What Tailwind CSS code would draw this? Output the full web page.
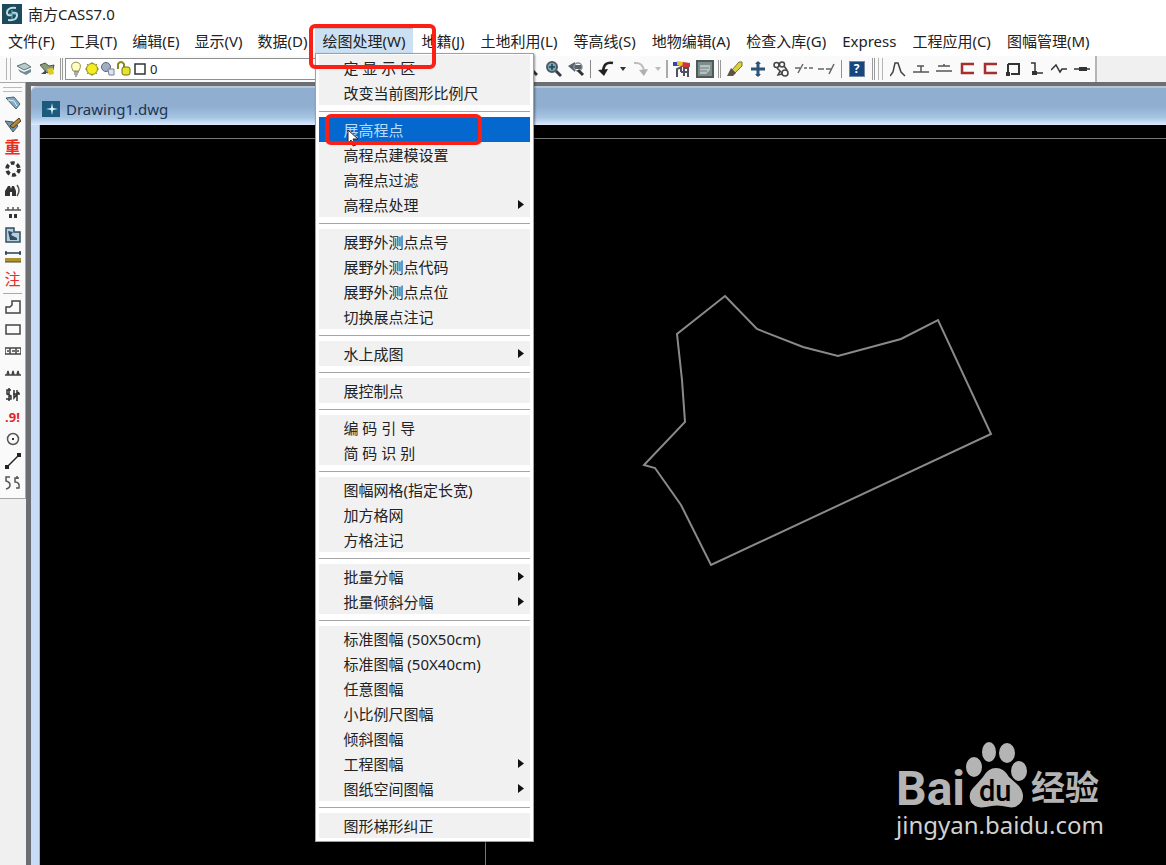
<!DOCTYPE html>
<html lang="zh-CN">

<head>
    <meta charset="UTF-8" />
    <title>南方CASS7.0</title>
    <script src="https://cdn.jsdelivr.net/npm/@tailwindcss/browser@4"></script>
</head>

<body class="h-screen flex flex-col overflow-hidden bg-[#f0f0f0] font-['Noto_Sans','Noto_Sans_CJK_SC',sans-serif] text-[15px] leading-5 text-[#222]">

    <!-- Title bar -->
    <header class="h-7 flex-none flex items-center gap-1.5 px-0.5 bg-white">
        <svg class="size-5" viewBox="0 0 20 20">
            <rect width="20" height="20" fill="#1d4a5c" />
            <path d="M14 4Q5 3 5 9q0 3 5 2M6 16q9 1 9-5 0-3-5-2" fill="none" stroke="#b9dfe4" stroke-width="2" />
            <path d="M10 6v9M7 10h7" stroke="#6fb3c0" />
        </svg>
        <h1>南方CASS7.0</h1>
    </header>

    <!-- Menu bar -->
    <nav class="h-7 flex-none bg-white relative z-20">
        <ul class="flex items-center h-[26px] pl-px whitespace-nowrap">
            <li><button class="pl-[7px] pr-2">文件(F)</button></li>
            <li><button class="pl-[7px] pr-2">工具(T)</button></li>
            <li><button class="pl-[7px] pr-2">编辑(E)</button></li>
            <li><button class="pl-[7px] pr-2">显示(V)</button></li>
            <li><button class="pl-[7px] pr-2">数据(D)</button></li>
            <li class="relative">
                <button class="h-[26px] pl-[7px] pr-2 bg-[#cbe1f3] border-y border-t-[#b0bfcc] border-b-[#cbe1f3]">绘图处理(W)</button>

                <ul class="absolute left-0 top-[25px] w-[219px] px-[3px] pt-px pb-[3px] bg-white border border-[#a0a0a0] shadow-[1px_1px_2px_#0006]">
                    <li><button class="w-full h-[25px] pl-6 text-left bg-[#f1f1f1]">定 显 示 区</button></li>
                    <li><button class="w-full h-[25px] pl-6 text-left bg-[#f1f1f1]">改变当前图形比例尺</button></li>
                    <li class="h-3 flex items-center"><hr class="w-full border-[#a6a6a6]" /></li>
                    <li class="relative">
                        <button class="w-full h-[25px] pl-6 text-left bg-[#0568cf] text-[#b9dcff]">展高程点</button>
                        <svg class="absolute left-7 top-3 w-3 h-[18px]" viewBox="0 0 12 18">
                            <path d="M1 1v13l3-3 2 6 3-1-3-6h5z" fill="#fff" stroke="#222" />
                        </svg>
                        <div class="absolute left-[6px] -top-[3px] w-[157px] h-[31px] border-4 border-[#fb2015] rounded-md pointer-events-none"></div>
                    </li>
                    <li><button class="w-full h-[25px] pl-6 text-left bg-[#f1f1f1]">高程点建模设置</button></li>
                    <li><button class="w-full h-[25px] pl-6 text-left bg-[#f1f1f1]">高程点过滤</button></li>
                    <li>
                        <button class="w-full h-[25px] pl-6 pr-1.5 flex items-center justify-between bg-[#f1f1f1]">高程点处理
                            <svg class="w-1.5 h-3" viewBox="0 0 6 12"><path d="M0 1v9l6-4.500z" fill="#111" /></svg>
                        </button>
                    </li>
                    <li class="h-3 flex items-center"><hr class="w-full border-[#a6a6a6]" /></li>
                    <li><button class="w-full h-[25px] pl-6 text-left bg-[#f1f1f1]">展野外测点点号</button></li>
                    <li><button class="w-full h-[25px] pl-6 text-left bg-[#f1f1f1]">展野外测点代码</button></li>
                    <li><button class="w-full h-[25px] pl-6 text-left bg-[#f1f1f1]">展野外测点点位</button></li>
                    <li><button class="w-full h-[25px] pl-6 text-left bg-[#f1f1f1]">切换展点注记</button></li>
                    <li class="h-3 flex items-center"><hr class="w-full border-[#a6a6a6]" /></li>
                    <li>
                        <button class="w-full h-[25px] pl-6 pr-1.5 flex items-center justify-between bg-[#f1f1f1]">水上成图
                            <svg class="w-1.5 h-3" viewBox="0 0 6 12"><path d="M0 1v9l6-4.500z" fill="#111" /></svg>
                        </button>
                    </li>
                    <li class="h-3 flex items-center"><hr class="w-full border-[#a6a6a6]" /></li>
                    <li><button class="w-full h-[25px] pl-6 text-left bg-[#f1f1f1]">展控制点</button></li>
                    <li class="h-3 flex items-center"><hr class="w-full border-[#a6a6a6]" /></li>
                    <li><button class="w-full h-[25px] pl-6 text-left bg-[#f1f1f1]">编 码 引 导</button></li>
                    <li><button class="w-full h-[25px] pl-6 text-left bg-[#f1f1f1]">简 码 识 别</button></li>
                    <li class="h-3 flex items-center"><hr class="w-full border-[#a6a6a6]" /></li>
                    <li><button class="w-full h-[25px] pl-6 text-left bg-[#f1f1f1]">图幅网格(指定长宽)</button></li>
                    <li><button class="w-full h-[25px] pl-6 text-left bg-[#f1f1f1]">加方格网</button></li>
                    <li><button class="w-full h-[25px] pl-6 text-left bg-[#f1f1f1]">方格注记</button></li>
                    <li class="h-3 flex items-center"><hr class="w-full border-[#a6a6a6]" /></li>
                    <li>
                        <button class="w-full h-[25px] pl-6 pr-1.5 flex items-center justify-between bg-[#f1f1f1]">批量分幅
                            <svg class="w-1.5 h-3" viewBox="0 0 6 12"><path d="M0 1v9l6-4.500z" fill="#111" /></svg>
                        </button>
                    </li>
                    <li>
                        <button class="w-full h-[25px] pl-6 pr-1.5 flex items-center justify-between bg-[#f1f1f1]">批量倾斜分幅
                            <svg class="w-1.5 h-3" viewBox="0 0 6 12"><path d="M0 1v9l6-4.500z" fill="#111" /></svg>
                        </button>
                    </li>
                    <li class="h-3 flex items-center"><hr class="w-full border-[#a6a6a6]" /></li>
                    <li><button class="w-full h-[25px] pl-6 text-left bg-[#f1f1f1]">标准图幅 (50X50cm)</button></li>
                    <li><button class="w-full h-[25px] pl-6 text-left bg-[#f1f1f1]">标准图幅 (50X40cm)</button></li>
                    <li><button class="w-full h-[25px] pl-6 text-left bg-[#f1f1f1]">任意图幅</button></li>
                    <li><button class="w-full h-[25px] pl-6 text-left bg-[#f1f1f1]">小比例尺图幅</button></li>
                    <li><button class="w-full h-[25px] pl-6 text-left bg-[#f1f1f1]">倾斜图幅</button></li>
                    <li>
                        <button class="w-full h-[25px] pl-6 pr-1.5 flex items-center justify-between bg-[#f1f1f1]">工程图幅
                            <svg class="w-1.5 h-3" viewBox="0 0 6 12"><path d="M0 1v9l6-4.500z" fill="#111" /></svg>
                        </button>
                    </li>
                    <li>
                        <button class="w-full h-[25px] pl-6 pr-1.5 flex items-center justify-between bg-[#f1f1f1]">图纸空间图幅
                            <svg class="w-1.5 h-3" viewBox="0 0 6 12"><path d="M0 1v9l6-4.500z" fill="#111" /></svg>
                        </button>
                    </li>
                    <li class="h-3 flex items-center"><hr class="w-full border-[#a6a6a6]" /></li>
                    <li><button class="w-full h-[25px] pl-6 text-left bg-[#f1f1f1]">图形梯形纠正</button></li>
                </ul>

                <div class="absolute -left-[6px] -top-1 w-[127px] h-[45px] border-4 border-[#fb2015] rounded-md pointer-events-none"></div>
            </li>
            <li><button class="px-2">地籍(J)</button></li>
            <li><button class="px-2">土地利用(L)</button></li>
            <li><button class="px-2">等高线(S)</button></li>
            <li><button class="px-2">地物编辑(A)</button></li>
            <li><button class="px-2">检查入库(G)</button></li>
            <li><button class="px-2">Express</button></li>
            <li><button class="px-2">工程应用(C)</button></li>
            <li><button class="px-2">图幅管理(M)</button></li>
        </ul>
    </nav>

    <!-- Toolbar -->
    <div class="h-[26px] flex-none flex bg-[#f0f0f0]">
        <div class="flex items-center bg-[#fafafa] border-r-2 border-[#b5b5b5] pr-0.5">
            <span class="w-[5px] h-[22px] ml-1.5 mr-[3px] border-x border-[#b5b5b5]"></span>
            <button class="w-[22px] grid place-items-center" aria-label="图层">
                <svg class="size-4" viewBox="0 0 16 16">
                    <path d="M0 5l8-3 6 4-7 3z" fill="#b7c9c8" stroke="#5d7678" />
                    <path d="M1 8l6 3 7-3v3l-5 3-6-3z" fill="#6c8d93" />
                </svg>
            </button>
            <button class="w-[22px] grid place-items-center" aria-label="图层置为当前">
                <svg class="size-4" viewBox="0 0 16 16">
                    <path d="M1 4l5-2 4 3 5-1-1 5-6 3z" fill="#8a9a78" stroke="#4b5548" />
                    <path d="M8 8l6-1 1 6-5 1z" fill="#e0c928" />
                    <path d="M2 13l5-4v4z" fill="#394f63" />
                </svg>
            </button>
            <span class="w-[3px] h-[22px] mx-[2px] border-x border-[#9b9b9b]"></span>
            <div class="w-[454px] h-[22px] flex items-center bg-white border border-[#909090] pl-0.5">
                <svg class="w-4 h-4" viewBox="0 0 16 16">
                    <path d="M5 10Q1 2 8 1q7 1 3 9z" fill="#fffbc4" stroke="#9a9352" />
                    <path d="M6 11h5M6 13h4M7 15h2" stroke="#555" />
                </svg>
                <svg class="w-4 h-4" viewBox="0 0 16 16">
                    <path d="M8 1v14M1 8h14M3 3l10 10M13 3L3 13" stroke="#8f8f30" />
                    <circle cx="8" cy="8" r="5.500" fill="#f3ec1f" stroke="#85852a" />
                </svg>
                <svg class="w-4 h-4" viewBox="0 0 16 16">
                    <circle cx="6" cy="6" r="4.500" fill="#a3adc2" stroke="#59637f" />
                    <path d="M8 8h6v6H9z" fill="#dfe3ea" stroke="#77809a" />
                </svg>
                <svg class="w-4 h-4" viewBox="0 0 16 16">
                    <path d="M2 8V3q3-4 6 0v4" fill="none" stroke="#8a8a20" stroke-width="2" />
                    <rect x="6" y="6" width="8" height="8" rx="2" fill="#e5e22b" stroke="#6f6e21" />
                </svg>
                <svg class="w-4 h-4" viewBox="0 0 16 16">
                    <rect x="3" y="3" width="10" height="10" fill="#fff" stroke="#333" stroke-width="1.500" />
                </svg>
                <select class="flex-1 appearance-none text-[13px] pl-0.5" aria-label="当前图层">
                    <option>0</option>
                </select>
            </div>
            <button class="w-[22px] grid place-items-center" aria-label="实时缩放">
                <svg class="size-4" viewBox="0 0 16 16"><circle cx="7" cy="6" r="4" fill="#bcd" stroke="#444" stroke-width="2" /><path d="M10 9l5 5" stroke="#333" stroke-width="3" /></svg>
            </button>
            <button class="w-[23px] grid place-items-center" aria-label="窗口缩放">
                <svg class="size-[18px]" viewBox="0 0 18 18">
                    <circle cx="8" cy="7" r="5" fill="#7fa9b5" stroke="#4a5a63" stroke-width="2" />
                    <path d="M5 7h6M8 4v6" stroke="#1e4058" stroke-width="1.500" />
                    <path d="M12 11l5 5" stroke="#333d45" stroke-width="3" />
                </svg>
            </button>
            <button class="w-[23px] grid place-items-center" aria-label="缩放上一个">
                <svg class="size-[18px]" viewBox="0 0 18 18">
                    <path d="M1 6l7-4v3h7v4H8v3z" fill="#56616c" />
                    <circle cx="11" cy="7" r="4" fill="none" stroke="#8a8f9b" stroke-width="1.500" />
                    <path d="M11 10l5 5" stroke="#333" stroke-width="3" />
                </svg>
            </button>
            <span class="w-px h-[18px] mx-[3px] bg-[#888]"></span>
            <button class="w-[23px] grid place-items-center" aria-label="放弃">
                <svg class="size-4" viewBox="0 0 16 16"><path d="M15 2Q6 0 5 10" fill="none" stroke="#222" stroke-width="2.500" /><path d="M0 9l10-1-4 7z" fill="#222" /></svg>
            </button>
            <button class="w-3 grid place-items-center" aria-label="放弃列表">
                <svg class="w-1.5 h-1" viewBox="0 0 6 4"><path d="M0 0h6L3 4z" fill="#333" /></svg>
            </button>
            <button class="w-[23px] grid place-items-center" aria-label="重做">
                <svg class="size-4" viewBox="0 0 16 16"><path d="M1 2q9-1 10 8" fill="none" stroke="#bbb" stroke-width="2" /><path d="M6 9l9-1-4 7z" fill="#b0b0b0" /></svg>
            </button>
            <button class="w-3 grid place-items-center" aria-label="重做列表">
                <svg class="w-1.5 h-1" viewBox="0 0 6 4"><path d="M0 0h6L3 4z" fill="#bbb" /></svg>
            </button>
            <span class="w-0.5 h-[18px] mx-[2px] bg-[#aaa]"></span>
            <button class="w-[23px] grid place-items-center" aria-label="特性匹配">
                <svg class="size-[18px]" viewBox="0 0 18 18">
                    <path d="M0 2h7v4H0z" fill="#3545ad" />
                    <path d="M4 1l7 1-2 5-5-2z" fill="#e6c428" />
                    <path d="M10 2l7 1v4H9z" fill="#d03535" />
                    <path d="M4 17V9l4-2v5M11 16V8h4v9M8 12h7" fill="none" stroke="#505060" stroke-width="2" />
                </svg>
            </button>
            <button class="w-[23px] grid place-items-center" aria-label="特性">
                <svg class="size-[18px]" viewBox="0 0 18 18">
                    <rect x="1" y="1" width="16" height="16" fill="#7e8c8c" stroke="#4e5959" stroke-width="2" />
                    <path d="M4 5h10v5l-4 4H4z" fill="#b5c2bf" />
                    <path d="M4 8h9M4 11h7" stroke="#72807e" />
                </svg>
            </button>
            <span class="w-[3px] h-[18px] mx-[2px] border-x border-[#999]"></span>
            <button class="w-[23px] grid place-items-center" aria-label="删除">
                <svg class="size-4" viewBox="0 0 16 16"><path d="M5 9l7-8h3v4l-7 7z" fill="#ded03b" stroke="#77733a" /><path d="M0 15l4-8 5 5-3 3z" fill="#5b544b" /></svg>
            </button>
            <button class="w-[23px] grid place-items-center" aria-label="移动">
                <svg class="size-4" viewBox="0 0 16 16"><path d="M8 1v14M1 8h14" stroke="#2c547b" stroke-width="3" /><path d="M5 3l3-3 3 3zM5 13l3 3 3-3z" fill="#2c547b" /></svg>
            </button>
            <button class="w-[23px] grid place-items-center" aria-label="复制">
                <svg class="size-4" viewBox="0 0 16 16"><g fill="none" stroke="#444" stroke-width="1.500"><circle cx="3.500" cy="4" r="2.500" /><circle cx="9" cy="3.500" r="2.500" /><circle cx="12" cy="12" r="3" /><path d="M4 7l5 5M11 5l3 4M7 10l-2 4 4-1" /></g></svg>
            </button>
            <button class="w-[23px] grid place-items-center" aria-label="修剪">
                <svg class="w-[18px] h-4" viewBox="0 0 18 16"><path d="M0 7h5M9 7h3M14 7h4M3 12l5-9" fill="none" stroke="#666" stroke-width="1.500" /></svg>
            </button>
            <button class="w-[23px] grid place-items-center" aria-label="延伸">
                <svg class="w-[18px] h-4" viewBox="0 0 18 16"><path d="M0 8h6M8 8h6M11 13l5-10" fill="none" stroke="#666" stroke-width="1.500" /></svg>
            </button>
            <span class="w-px h-[18px] mx-[3px] bg-[#a08f80]"></span>
            <button class="w-[23px] grid place-items-center" aria-label="帮助">
                <span class="size-4 bg-[#17477f] border border-[#6f8ba8] text-white text-xs leading-[14px] font-bold">?</span>
            </button>
            <span class="w-[3px] h-[22px] ml-1 border-x border-[#999]"></span>
            <span class="w-[5px] h-[22px] mx-[3px] border-x border-[#b5b5b5]"></span>
            <button class="w-[23px] grid place-items-center" aria-label="多段线">
                <svg class="size-4" viewBox="0 0 16 16"><path d="M0 15l3-4 2-9h3l3 9 4 4" fill="none" stroke="#444" stroke-width="1.500" /></svg>
            </button>
            <button class="w-[23px] grid place-items-center" aria-label="坎线">
                <svg class="size-4" viewBox="0 0 16 16"><path d="M0 11h16M4 5h7M8 5v6" fill="none" stroke="#555" stroke-width="1.500" /></svg>
            </button>
            <button class="w-[23px] grid place-items-center" aria-label="平行线">
                <svg class="size-4" viewBox="0 0 16 16"><path d="M2 5h12M0 10h16M8 3v2" fill="none" stroke="#555" stroke-width="1.500" /></svg>
            </button>
            <button class="w-[23px] grid place-items-center" aria-label="三点房屋">
                <svg class="size-4" viewBox="0 0 16 16"><path d="M15 3H3v9h12" fill="none" stroke="#a52e2e" stroke-width="2.500" /></svg>
            </button>
            <button class="w-[23px] grid place-items-center" aria-label="四点房屋">
                <svg class="size-4" viewBox="0 0 16 16"><path d="M15 3H3v9h12" fill="none" stroke="#a52e2e" stroke-width="2.500" /></svg>
            </button>
            <button class="w-[23px] grid place-items-center" aria-label="多点房屋">
                <svg class="size-4" viewBox="0 0 16 16"><path d="M3 3h11v10H6M3 3v8" fill="none" stroke="#333" stroke-width="2" /><path d="M1 11h4v4H1z" fill="#333" /></svg>
            </button>
            <button class="w-[23px] grid place-items-center" aria-label="折线">
                <svg class="size-4" viewBox="0 0 16 16"><path d="M3 2h4v10h8" fill="none" stroke="#333" stroke-width="1.500" /><path d="M4 10h5v4H4z" fill="#333" /></svg>
            </button>
            <button class="w-[23px] grid place-items-center" aria-label="曲线">
                <svg class="size-4" viewBox="0 0 16 16"><path d="M0 9l5-5 4 7 2-3h5" fill="none" stroke="#333" stroke-width="1.500" /></svg>
            </button>
            <button class="w-[23px] grid place-items-center" aria-label="加点">
                <svg class="size-4" viewBox="0 0 16 16"><path d="M0 8h16" stroke="#333" stroke-width="1.500" /><path d="M5 6h8v4H5z" fill="#333" /></svg>
            </button>
        </div>
    </div>

    <!-- Workspace -->
    <div class="flex-1 flex min-h-0">
        <aside class="w-[26px] flex-none">
            <div class="flex flex-col bg-[#fafafa] border-t border-r border-b border-[#a8a8a8] pb-1">
                <span class="h-[5px] mx-[3px] mt-1 border-y border-[#bbb]"></span>
                <button class="h-[22px] grid place-items-center" aria-label="查看实体编码">
                    <svg class="size-4" viewBox="0 0 16 16"><path d="M1 3l8-1 6 7-4 5z" fill="#86abc2" stroke="#426378" /><path d="M3 5l6 1 3 5" stroke="#dcecf4" fill="none" /></svg>
                </button>
                <button class="h-[22px] grid place-items-center" aria-label="加入实体编码">
                    <svg class="size-4" viewBox="0 0 16 16"><path d="M0 4l8 1 5 4-5 6z" fill="#7596aa" stroke="#3e5663" /><path d="M5 9l9-8 2 3-8 7z" fill="#bb862c" stroke="#4b3a20" /></svg>
                </button>
                <button class="h-[22px] text-base leading-[22px] font-bold text-[#ee2c1d]">重</button>
                <button class="h-[22px] grid place-items-center" aria-label="批量选目标">
                    <svg class="size-4" viewBox="0 0 16 16"><circle cx="8" cy="8" r="6" fill="none" stroke="#333" stroke-width="3.500" stroke-dasharray="4 2.300" /></svg>
                </button>
                <button class="h-[22px] grid place-items-center" aria-label="查找">
                    <svg class="size-4" viewBox="0 0 16 16"><path d="M0 13V8l3-5h2l1 3 1-3h2l2 5v5H7V9H5v4z" fill="#333" /><path d="M12 2q4 5 0 11" fill="none" stroke="#555" stroke-width="1.500" /></svg>
                </button>
                <button class="h-[22px] grid place-items-center" aria-label="坎高查询">
                    <svg class="size-4" viewBox="0 0 16 16"><path d="M0 5h16M3 2v3M8 2v3M13 2v3" stroke="#555" stroke-width="1.500" /><path d="M4 9h3v4H4zM9 9h3v4H9z" fill="#333" /></svg>
                </button>
                <button class="h-[22px] grid place-items-center" aria-label="属性复制">
                    <svg class="size-4" viewBox="0 0 16 16"><path d="M1 1h8v4h6v10H1z" fill="#b9cedb" stroke="#2e4d63" stroke-width="1.500" /><path d="M3 4l5 1-2 3 6 3v2H5z" fill="#2e4d63" /></svg>
                </button>
                <button class="h-[22px] grid place-items-center" aria-label="量距">
                    <svg class="size-4" viewBox="0 0 16 16"><path d="M0 4h16M1 2v4M15 2v4" stroke="#223f5c" stroke-width="1.500" /><path d="M0 9h16v4H0z" fill="#ae9130" /><path d="M0 13h16" stroke="#554a20" /></svg>
                </button>
                <button class="h-[22px] text-base leading-[22px] text-[#e2302b]">注</button>
                <span class="h-1.5 mx-[3px] flex items-center"><hr class="w-full border-[#aaa]" /></span>
                <button class="h-[22px] grid place-items-center" aria-label="多点一般房屋">
                    <svg class="size-4" viewBox="0 0 16 16"><path d="M1 8h4l2-2V2h8v12H1z" fill="none" stroke="#444" stroke-width="1.500" /></svg>
                </button>
                <button class="h-[22px] grid place-items-center" aria-label="四点一般房屋">
                    <svg class="size-4" viewBox="0 0 16 16"><rect x="1" y="4" width="14" height="9" fill="none" stroke="#444" stroke-width="1.500" /></svg>
                </button>
                <button class="h-[22px] grid place-items-center" aria-label="依比例围墙">
                    <svg class="size-4" viewBox="0 0 16 16"><path d="M0 5h16v6H0zM5 5v6M11 5v6M2 8h2M7 8h3M12 8h2" fill="none" stroke="#444" stroke-width="1.500" /></svg>
                </button>
                <button class="h-[22px] grid place-items-center" aria-label="陡坎">
                    <svg class="size-4" viewBox="0 0 16 16"><path d="M0 10h16M2 10l1-4 1 4M7 10l1-4 1 4M12 10l1-4 1 4" fill="none" stroke="#444" stroke-width="1.500" /></svg>
                </button>
                <button class="h-[22px] grid place-items-center" aria-label="斜坡">
                    <svg class="size-4" viewBox="0 0 16 16"><path d="M6 3H2v4l4 2v3H1M4 1v13M9 3v8l5-6M8 7h7M12 3v11" fill="none" stroke="#333" stroke-width="1.500" /></svg>
                </button>
                <button class="h-[22px] text-[13px] leading-[22px] font-bold text-[#df2a2a]">.9!</button>
                <button class="h-[22px] grid place-items-center" aria-label="圆">
                    <svg class="size-4" viewBox="0 0 16 16"><circle cx="8" cy="8" r="5.500" fill="none" stroke="#555" stroke-width="1.500" /><path d="M7 8h2" stroke="#333" stroke-width="2" /></svg>
                </button>
                <button class="h-[22px] grid place-items-center" aria-label="直线">
                    <svg class="size-4" viewBox="0 0 16 16"><path d="M1 15L15 1" stroke="#222" stroke-width="1.500" /><path d="M0 12h4v4H0zM12 0h4v4h-4z" fill="#222" /></svg>
                </button>
                <button class="h-[22px] grid place-items-center" aria-label="曲线拟合">
                    <svg class="size-4" viewBox="0 0 16 16"><path d="M5 2H1v4q4 1 4 4t-4 4M14 3h-4v4q5 0 4 6h-3M12 1v3" fill="none" stroke="#555" stroke-width="1.500" /></svg>
                </button>
            </div>
        </aside>

        <section class="flex-1 min-w-0 flex flex-col border-t-4 border-l-[5px] border-[#6b6f73]">
            <div class="h-[39px] flex-none flex items-center gap-1.5 pl-[11px] pt-1.5 pb-0.5 rounded-tl-md border-t-2 border-[#b9c4d4] bg-linear-to-b from-[#90aed0] from-50% via-[#a6c5e3] via-80% to-[#dceafd]">
                <svg class="w-[18px] h-4" viewBox="0 0 18 16">
                    <rect width="18" height="16" fill="#1b5a7c" />
                    <path d="M10 2l1 5 5 1-5 1-1 5-1-5-5-1 5-1z" fill="#d8f3fb" />
                </svg>
                <h2 class="text-[#1f3450]">Drawing1.dwg</h2>
            </div>
            <div class="flex-1 min-h-0 flex">
                <div class="w-[9px] flex-none bg-[#c9dcf5] border-r border-[#86b3d6]"></div>
                <main class="relative flex-1 min-w-0 overflow-hidden bg-black">
                    <svg class="absolute left-0 top-0 w-[1126px] h-[740px]" viewBox="40 125 1126 740" fill="none">
                        <path d="M40 138.500H1166M485.500 830V865" stroke="#777" />
                        <polygon points="725,296 757,329 803,347 838,356 901,339 938,320 991,434 711,565 681,505 655,468 644,465 685,422 682,380 677,334" stroke="#8a8a8a" stroke-width="2" />
                    </svg>

                    <!-- Watermark -->
                    <div class="absolute right-[60px] bottom-[26px] w-[210px] text-[#b4b4b4]">
                        <div class="flex items-end">
                            <span class="font-['Roboto',sans-serif] font-bold text-5xl leading-[44px]">Bai</span>
                            <svg class="w-[62px] h-[70px] flex-none" viewBox="0 0 62 70">
                                <g fill="#b4b4b4">
                                    <ellipse cx="9" cy="26" rx="8" ry="10" />
                                    <ellipse cx="24" cy="11" rx="7" ry="10" />
                                    <ellipse cx="42" cy="12" rx="8" ry="10" />
                                    <ellipse cx="54" cy="30" rx="8" ry="10" />
                                    <path d="M31 27q8 0 13 9l10 9q6 8 3 15-5 8-14 6-11-3-22 0-11 2-15-5-4-9 4-16l8-9q5-9 13-9z" />
                                </g>
                                <text x="14" y="60" font-family="Roboto, sans-serif" font-size="29" font-weight="500" fill="#000">du</text>
                            </svg>
                            <span class="pl-1 text-[34px] leading-[44px] pb-0.5 font-bold">经验</span>
                        </div>
                        <div class="text-2xl leading-7 text-[#d2d2d2]">jingyan.baidu.com</div>
                    </div>
                </main>
            </div>
        </section>
    </div>
</body>

</html>
